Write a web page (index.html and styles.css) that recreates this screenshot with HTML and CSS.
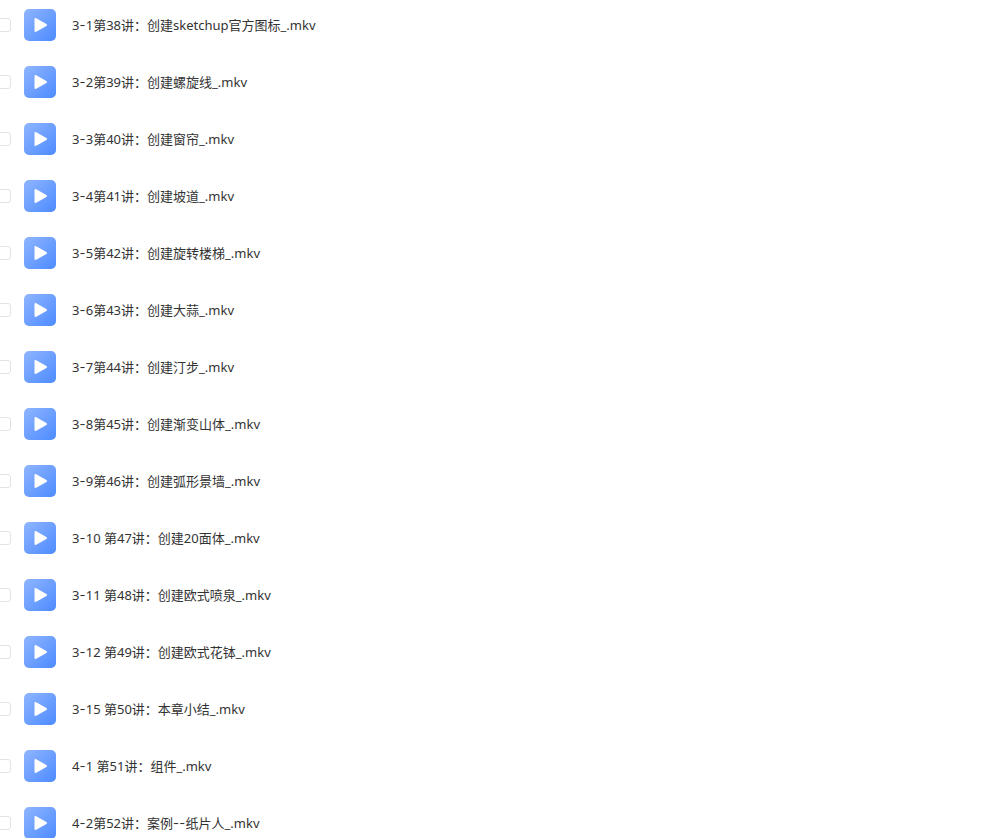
FILE: index.html
```html
<!DOCTYPE html>
<html lang="zh-CN">
<head>
    <meta charset="UTF-8">
    <title>课程文件列表</title>
    <link rel="stylesheet" href="styles.css">
</head>
<body>
    <svg class="defs" width="0" height="0" aria-hidden="true">
        <defs>
            <linearGradient id="tile" x1="0" y1="0" x2="1" y2="1">
                <stop offset="0" stop-color="#8fb5ff"/>
                <stop offset="1" stop-color="#4d8bff"/>
            </linearGradient>
            <symbol id="video" viewBox="0 0 32 32">
                <rect width="32" height="32" rx="5" fill="url(#tile)"/>
                <path d="M10.5 10.2c0-1 .9-1.5 1.7-1l10.2 5.8c.8.5.8 1.5 0 2l-10.2 5.8c-.8.5-1.7 0-1.7-1z" fill="#fff"/>
            </symbol>
        </defs>
    </svg>

    <ul class="file-list">
        <li class="file-row"><span class="check"></span><svg class="file-icon"><use href="#video"/></svg><span class="file-name">3<span class="dash">-</span>1第38讲：创建sketchup官方图标_.mkv</span></li>
        <li class="file-row"><span class="check"></span><svg class="file-icon"><use href="#video"/></svg><span class="file-name">3<span class="dash">-</span>2第39讲：创建螺旋线_.mkv</span></li>
        <li class="file-row"><span class="check"></span><svg class="file-icon"><use href="#video"/></svg><span class="file-name">3<span class="dash">-</span>3第40讲：创建窗帘_.mkv</span></li>
        <li class="file-row"><span class="check"></span><svg class="file-icon"><use href="#video"/></svg><span class="file-name">3<span class="dash">-</span>4第41讲：创建坡道_.mkv</span></li>
        <li class="file-row"><span class="check"></span><svg class="file-icon"><use href="#video"/></svg><span class="file-name">3<span class="dash">-</span>5第42讲：创建旋转楼梯_.mkv</span></li>
        <li class="file-row"><span class="check"></span><svg class="file-icon"><use href="#video"/></svg><span class="file-name">3<span class="dash">-</span>6第43讲：创建大蒜_.mkv</span></li>
        <li class="file-row"><span class="check"></span><svg class="file-icon"><use href="#video"/></svg><span class="file-name">3<span class="dash">-</span>7第44讲：创建汀步_.mkv</span></li>
        <li class="file-row"><span class="check"></span><svg class="file-icon"><use href="#video"/></svg><span class="file-name">3<span class="dash">-</span>8第45讲：创建渐变山体_.mkv</span></li>
        <li class="file-row"><span class="check"></span><svg class="file-icon"><use href="#video"/></svg><span class="file-name">3<span class="dash">-</span>9第46讲：创建弧形景墙_.mkv</span></li>
        <li class="file-row"><span class="check"></span><svg class="file-icon"><use href="#video"/></svg><span class="file-name">3<span class="dash">-</span>10 第47讲：创建20面体_.mkv</span></li>
        <li class="file-row"><span class="check"></span><svg class="file-icon"><use href="#video"/></svg><span class="file-name">3<span class="dash">-</span>11 第48讲：创建欧式喷泉_.mkv</span></li>
        <li class="file-row"><span class="check"></span><svg class="file-icon"><use href="#video"/></svg><span class="file-name">3<span class="dash">-</span>12 第49讲：创建欧式花钵_.mkv</span></li>
        <li class="file-row"><span class="check"></span><svg class="file-icon"><use href="#video"/></svg><span class="file-name">3<span class="dash">-</span>15 第50讲：本章小结_.mkv</span></li>
        <li class="file-row"><span class="check"></span><svg class="file-icon"><use href="#video"/></svg><span class="file-name">4<span class="dash">-</span>1 第51讲：组件_.mkv</span></li>
        <li class="file-row"><span class="check"></span><svg class="file-icon"><use href="#video"/></svg><span class="file-name">4<span class="dash">-</span>2第52讲：案例<span class="dash">--</span>纸片人_.mkv</span></li>
    </ul>
</body>
</html>
```

FILE: styles.css
```css
html, body {
    height: 100%;
    overflow: hidden;
}
body {
    margin: 0;
    background: #fff;
    font-family: "Noto Sans", "Noto Sans CJK SC", sans-serif;
    font-size: 13px;
    color: #333;
}
.defs {
    display: block;
}
.file-list {
    list-style: none;
    margin: 0;
    padding: 9px 0 0;
    display: flex;
    flex-direction: column;
    gap: 25px;
}
.file-row {
    display: flex;
    align-items: center;
    height: 32px;
    flex-shrink: 0;
}
.check {
    box-sizing: border-box;
    width: 14px;
    height: 14px;
    margin-left: -3px;
    margin-right: 13px;
    border: 1px solid #e3e3e3;
    border-radius: 3px;
    background: #fff;
}
.file-icon {
    width: 32px;
    height: 32px;
    margin-right: 16px;
    flex-shrink: 0;
}
.file-name {
    line-height: 20px;
    white-space: nowrap;
}
/* the hyphens run wider than Noto's in the original */
.dash {
    font-family: "Inter", sans-serif;
    letter-spacing: 0.3px;
}
```
